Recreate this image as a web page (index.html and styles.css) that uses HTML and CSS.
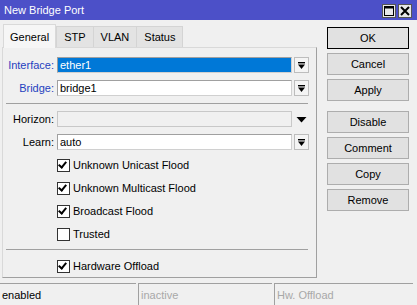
FILE: index.html
```html
<!DOCTYPE html>
<html lang="en">
<head>
    <meta charset="UTF-8">
    <title>New Bridge Port</title>
    <link rel="stylesheet" href="styles.css">
</head>
<body>

<div class="titlebar">
    <span class="title">New Bridge Port</span>
    <div class="winbtns">
        <span class="winbtn"><svg width="10" height="10" viewBox="0 0 10 10"><rect x="0.5" y="0.5" width="9" height="9" fill="none" stroke="#000"/><line x1="0" y1="1.5" x2="10" y2="1.5" stroke="#000" stroke-width="2"/></svg></span>
        <span class="winbtn"><svg width="10" height="10" viewBox="0 0 10 10"><path d="M1 1 L9 9 M9 1 L1 9" stroke="#000" stroke-width="2"/></svg></span>
    </div>
</div>

<div class="main">
    <div class="left">
        <div class="tabs">
            <div class="tab active">General</div>
            <div class="tab">STP</div>
            <div class="tab">VLAN</div>
            <div class="tab">Status</div>
        </div>
        <div class="panel">
            <div class="row">
                <label class="req">Interface:</label>
                <div class="field selected">ether1</div>
                <span class="drop"><svg width="9" height="9" viewBox="0 0 9 9"><rect x="1" y="1" width="7" height="1.4" fill="#000"/><path d="M1 3.5 H8 L4.5 8 Z" fill="#000"/></svg></span>
            </div>
            <div class="row">
                <label class="req">Bridge:</label>
                <div class="field">bridge1</div>
                <span class="drop"><svg width="9" height="9" viewBox="0 0 9 9"><rect x="1" y="1" width="7" height="1.4" fill="#000"/><path d="M1 3.5 H8 L4.5 8 Z" fill="#000"/></svg></span>
            </div>
            <hr class="sep">
            <div class="row">
                <label>Horizon:</label>
                <div class="field empty"></div>
                <span class="drop plain"><svg width="11" height="7" viewBox="0 0 11 7"><path d="M0.5 1 H10.5 L5.5 6.5 Z" fill="#000"/></svg></span>
            </div>
            <div class="row">
                <label>Learn:</label>
                <div class="field">auto</div>
                <span class="drop"><svg width="9" height="9" viewBox="0 0 9 9"><rect x="1" y="1" width="7" height="1.4" fill="#000"/><path d="M1 3.5 H8 L4.5 8 Z" fill="#000"/></svg></span>
            </div>
            <div class="check"><span class="box on"></span>Unknown Unicast Flood</div>
            <div class="check"><span class="box on"></span>Unknown Multicast Flood</div>
            <div class="check"><span class="box on"></span>Broadcast Flood</div>
            <div class="check"><span class="box"></span>Trusted</div>
            <hr class="sep low">
            <div class="check"><span class="box on"></span>Hardware Offload</div>
        </div>
    </div>
    <div class="buttons">
        <div class="btn default">OK</div>
        <div class="btn">Cancel</div>
        <div class="btn">Apply</div>
        <div class="btn gap">Disable</div>
        <div class="btn">Comment</div>
        <div class="btn">Copy</div>
        <div class="btn">Remove</div>
    </div>
</div>

<div class="statusbar">
    <div class="cell first">enabled</div>
    <div class="cell dim">inactive</div>
    <div class="cell dim last">Hw. Offload</div>
</div>

</body>
</html>
```

FILE: styles.css
```css
body {
    margin: 0;
    width: 417px;
    height: 305px;
    overflow: hidden;
    background: #f0f0f0;
    font-family: "Liberation Sans", Arial, sans-serif;
    font-size: 11px;
    color: #000;
}
.titlebar {
    height: 20px;
    background: #4c50c8;
    display: flex;
    align-items: center;
    justify-content: space-between;
    padding: 0 5px 0 4px;
}
.title {
    color: #fff;
    font-size: 11px;
}
.winbtns {
    display: flex;
    gap: 2px;
    margin-top: 2px;
}
.winbtn {
    width: 12px;
    height: 12px;
    background: #e8e8e8;
    border: 1px solid #555;
    display: flex;
    align-items: center;
    justify-content: center;
}
.main {
    display: flex;
    height: 258px;
}
.left {
    width: 315px;
    margin-left: 2px;
    padding-top: 3px;
}
.tabs {
    display: flex;
    align-items: flex-end;
    height: 24px;
    padding-left: 1px;
}
.tab {
    height: 20px;
    padding: 0 7px;
    background: #e3e3e3;
    border: 1px solid #d4d4d4;
    border-bottom: none;
    display: flex;
    align-items: center;
    margin-left: -1px;
}
.tab.active {
    height: 23px;
    background: #f6f6f6;
    border-color: #d9d9d9;
    padding: 0 6px;
    margin-left: 0;
    margin-right: 1px;
    position: relative;
    top: 1px;
    z-index: 1;
}
.panel {
    height: 231px;
    border: 1px solid #d9d9d9;
    border-right-color: #a0a0a0;
    border-bottom-color: #a0a0a0;
    background: #f0f0f0;
    padding-top: 9px;
    box-sizing: border-box;
}
.row {
    display: flex;
    align-items: center;
    height: 16px;
    margin-bottom: 7px;
}
.row label {
    width: 51px;
    text-align: right;
    padding-right: 3px;
    color: #000;
}
.row label.req {
    color: #1f3fbf;
}
.field {
    width: 231px;
    height: 14px;
    line-height: 14px;
    border: 1px solid #a0a0a0;
    border-right-color: #d0d0d0;
    border-bottom-color: #d0d0d0;
    background: #fff;
    padding-left: 2px;
}
.field.selected {
    background: #0078d7;
    color: #fff;
}
.field.empty {
    background: #f0f0f0;
    border-color: #c8c8c8;
}
.drop {
    width: 13px;
    height: 14px;
    margin-left: 2px;
    border: 1px solid #bdbdbd;
    background: #f4f4f4;
    display: flex;
    align-items: center;
    justify-content: center;
}
.drop.plain {
    border: none;
    background: none;
    width: 15px;
}
.sep {
    border: none;
    border-top: 1px solid #a0a0a0;
    margin: 0 8px 7px 3px;
}
.sep.low {
    margin-top: 2px;
    margin-bottom: 8px;
}
.check {
    display: flex;
    align-items: center;
    height: 16px;
    margin-bottom: 7px;
    padding-left: 54px;
}
.box {
    width: 11px;
    height: 11px;
    border: 1px solid #333;
    background: #fff;
    margin-right: 3px;
    position: relative;
}
.box.on::after {
    content: "";
    position: absolute;
    left: 2px;
    top: 0px;
    width: 3px;
    height: 6px;
    border: solid #000;
    border-width: 0 2px 2px 0;
    transform: rotate(40deg);
}
.buttons {
    display: flex;
    flex-direction: column;
    gap: 4px;
    margin-left: 10px;
    padding-top: 7px;
}
.btn {
    width: 80px;
    height: 20px;
    border: 1px solid #adadad;
    background: #e1e1e1;
    display: flex;
    align-items: center;
    justify-content: center;
}
.btn.default {
    border-color: #000;
}
.btn.gap {
    margin-top: 6px;
}
.statusbar {
    display: flex;
    margin-top: 5px;
    gap: 2px;
}
.cell {
    width: 131px;
    height: 21px;
    border-top: 1px solid #a0a0a0;
    border-left: 1px solid #a0a0a0;
    padding-left: 2px;
    display: flex;
    align-items: center;
}
.cell.first {
    border-left: none;
    width: 134px;
}
.cell.dim {
    color: #a8a8a8;
}
.cell.last {
    width: 136px;
}
```
